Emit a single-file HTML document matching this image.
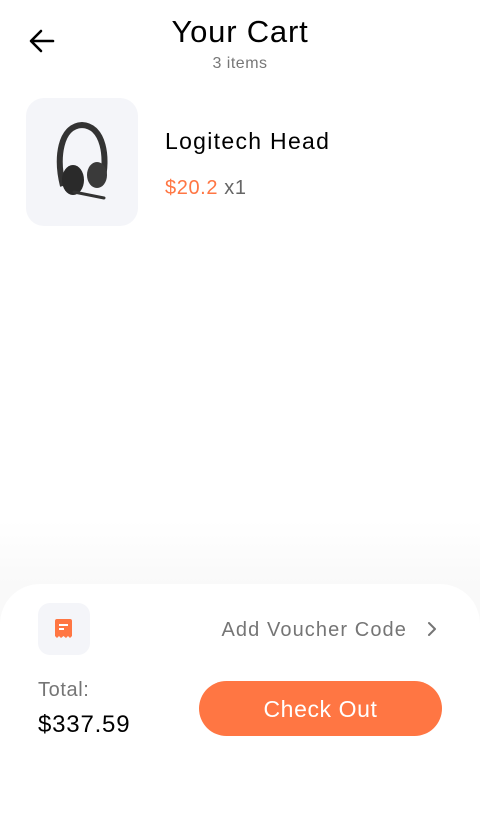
<!DOCTYPE html>
<html><head><meta charset="utf-8"><style>
*{margin:0;padding:0;box-sizing:border-box}
body{width:480px;height:800px;overflow:hidden;font-family:"Liberation Sans",sans-serif;background:linear-gradient(#fff 0,#fff 520px,#f9f9f9 584px);position:relative}
.abs{position:absolute}
</style></head><body>
<svg class="abs" style="left:28px;top:28px" width="28" height="26" viewBox="0 0 28 26"><path d="M25 13H4M13 3L3 13l10 10" fill="none" stroke="#000" stroke-width="2.6" stroke-linecap="round" stroke-linejoin="round"/></svg>
<div class="abs" style="left:0;width:480px;top:14px;text-align:center;font-size:31px;letter-spacing:0.8px;color:#000">Your Cart</div>
<div class="abs" style="left:0;width:480px;top:55px;text-align:center;font-size:16px;letter-spacing:0.5px;color:#777">3 items</div>
<div class="abs" style="left:26px;top:98px;width:112px;height:128px;border-radius:18px;background:#f4f5f9">
<svg width="112" height="128" viewBox="0 0 112 128">
<path d="M37 88 C30 60,34 28,56 27 C78 28,82 60,76 84" fill="none" stroke="#333" stroke-width="6"/>
<ellipse cx="47" cy="82" rx="11" ry="15" fill="#2a2a2a"/>
<ellipse cx="71" cy="77" rx="10" ry="13" fill="#3a3a3a"/>
<path d="M48 94 L78 100" stroke="#333" stroke-width="3" stroke-linecap="round"/>
</svg></div>
<div class="abs" style="left:165px;top:128px;font-size:23px;letter-spacing:1.3px;color:#000">Logitech Head</div>
<div class="abs" style="left:165px;top:177px;font-size:20px;letter-spacing:0.6px;color:#ff7643">$20.2 <span style="color:#666">x1</span></div>
<div class="abs" style="left:0;top:584px;width:480px;height:240px;background:#fff;border-radius:40px 40px 0 0"></div>
<div class="abs" style="left:38px;top:603px;width:52px;height:52px;border-radius:12px;background:#f4f5f9">
<svg class="abs" style="left:17px;top:16px" width="17" height="20" viewBox="0 0 17 20"><path d="M0 2Q0 0 2 0H15Q17 0 17 2V17L15 19 13 17 11 19 8.5 17 6 19 4 17 2 19 0 17Z" fill="#ff7643"/><rect x="4" y="5" width="9" height="2" fill="#fff"/><rect x="4" y="9" width="5" height="2" fill="#fff"/></svg></div>
<div class="abs" style="right:73px;top:619px;font-size:20px;letter-spacing:1.1px;color:#757575">Add Voucher Code</div>
<svg class="abs" style="left:426px;top:620px" width="12" height="18" viewBox="0 0 12 18"><path d="M3 3l6 6-6 6" fill="none" stroke="#757575" stroke-width="2" stroke-linecap="round" stroke-linejoin="round"/></svg>
<div class="abs" style="left:38px;top:679px;font-size:20px;letter-spacing:0.6px;color:#757575">Total:</div>
<div class="abs" style="left:38px;top:711px;font-size:24px;letter-spacing:0.8px;color:#000">$337.59</div>
<div class="abs" style="left:199px;top:681px;width:243px;height:55px;border-radius:28px;background:#ff7643;color:#fff;font-size:23px;letter-spacing:0.6px;text-align:center;line-height:57px">Check Out</div>
</body></html>
